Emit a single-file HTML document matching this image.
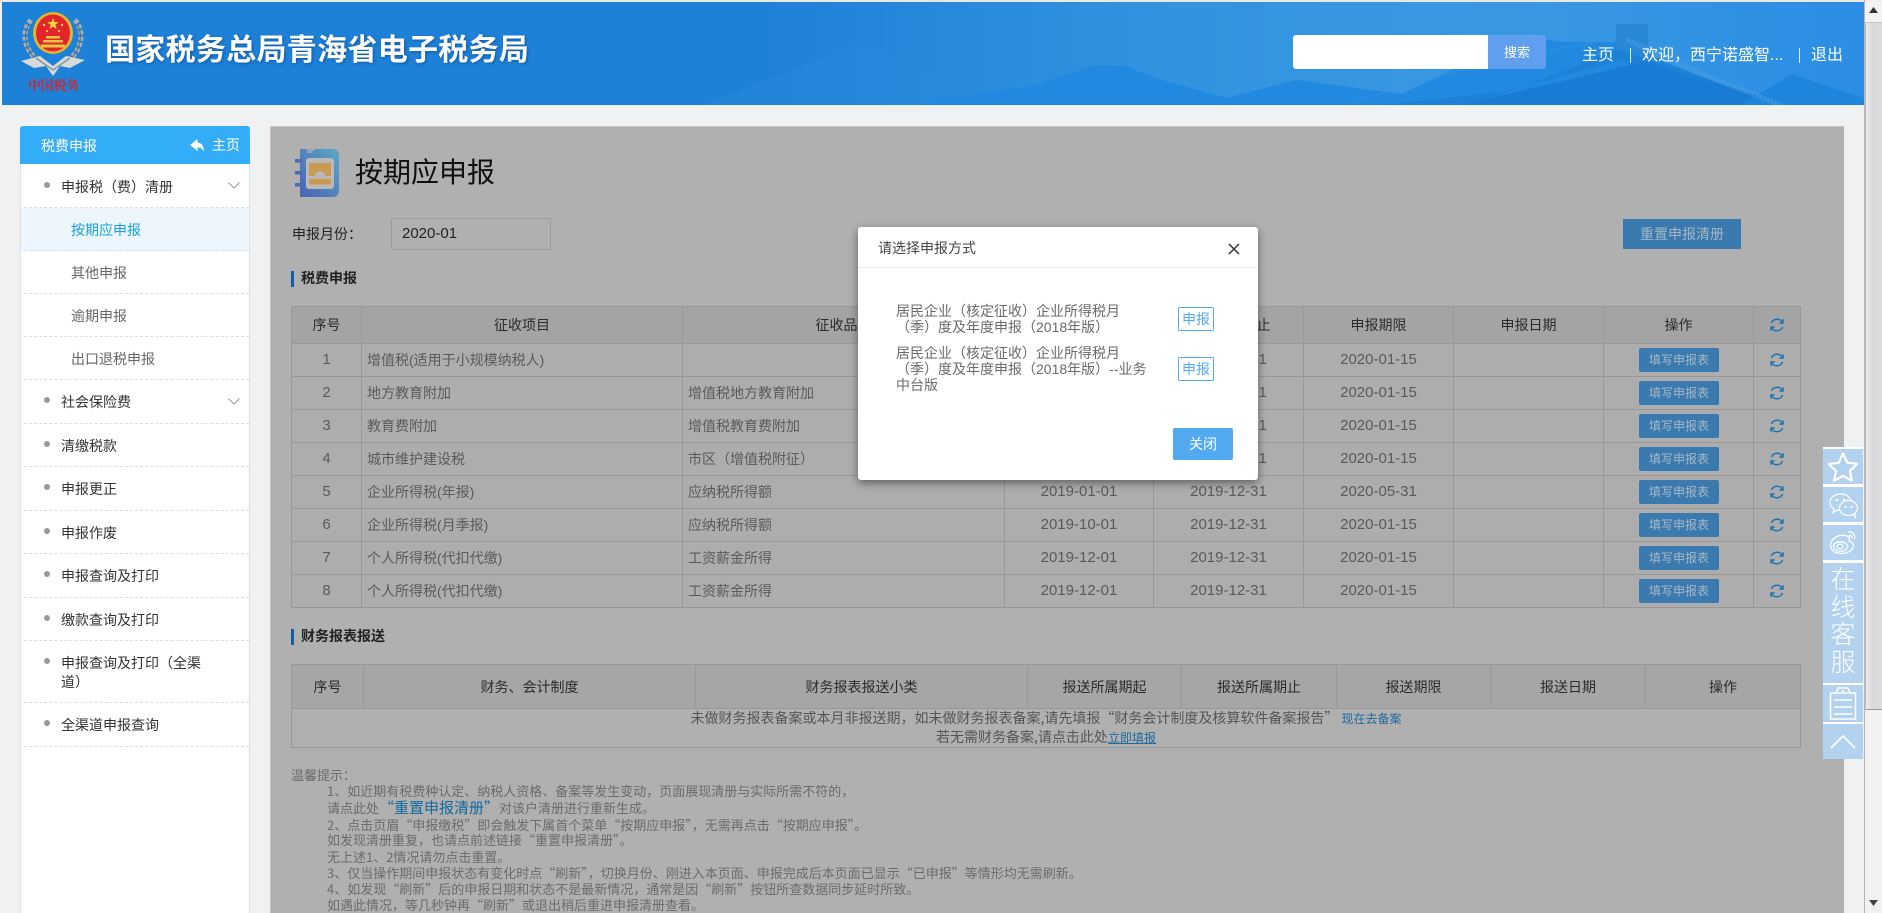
<!DOCTYPE html>
<html lang="zh-CN">
<head>
<meta charset="utf-8">
<title>国家税务总局青海省电子税务局</title>
<style>
html,body{margin:0;padding:0;width:1882px;height:913px;overflow:hidden;background:#f0f1f3}
body{position:relative;font-family:"Liberation Sans","Noto Sans CJK SC",sans-serif;font-size:14px;color:#333}
.t{position:absolute;white-space:nowrap;line-height:20px}
.a{position:absolute}
#hd{position:absolute;left:2px;top:2px;width:1862px;height:103px;overflow:hidden;background:linear-gradient(90deg,#1e81d8 0,#1e81d8 760px,#3193e0 1150px,#3a98e3 1500px,#2b8ee4 1862px)}
#side{position:absolute;left:20px;top:126px;width:228px;height:787px;background:#fff;border-left:1px solid #dcdfe3;border-right:1px solid #dcdfe3}
#side .h{position:absolute;left:-1px;top:0;width:230px;height:38px;background:#33adf7;border-radius:3px 3px 0 0}
.d{position:absolute;left:24px;width:225px;border-top:1px dashed #dedede;height:0}
.b{position:absolute;left:44px;width:6px;height:6px;border-radius:50%;background:#999}
.p{left:61px;color:#333}
.s{left:71px;color:#666}
#panel{position:absolute;left:270px;top:126px;width:1574px;height:787px;background:#b0b0b0;border-left:1px solid #c4c4c4;border-top:1px solid #c4c4c4;box-sizing:border-box}
table{position:absolute;border-collapse:collapse;table-layout:fixed;left:291px;font-size:14px}
td,th{border:1px solid #989898;padding:0;text-align:center;font-weight:normal;color:#5a5a5a;overflow:hidden;white-space:nowrap;line-height:20px}
th{background:#a4a4a4;color:#2b2b2b}
#t1 td{background:#adadad;height:32px}
#t1 th{height:36px}
#t1 td.l{text-align:left;padding-left:5px}
.n{font-size:15px}
.bn{display:block;width:80px;height:24px;line-height:24px;margin:0 0 0 35px;background:#3b7aae;color:#a6b8c8;font-size:12px;border-radius:2px;text-align:center}
#t2 th{height:43px;background:#a6a6a6}
#t2 td{background:#b0b0b0;color:#555;height:37px;line-height:19px;font-family:"Noto Sans CJK SC","Liberation Sans",sans-serif}
.lk{color:#1c6a9e;font-size:12px}
.note{position:absolute;left:327px;white-space:nowrap;font-size:13px;line-height:16px;color:#6b6b6b;font-family:"Noto Sans CJK SC","Liberation Sans",sans-serif}
#modal{position:absolute;left:858px;top:227px;width:400px;height:253px;background:#fff;border-radius:3px;box-shadow:0 3px 9px rgba(0,0,0,.45)}
.mb{position:absolute;left:320px;width:34px;height:22px;line-height:22px;border:1px solid #55aaf0;border-radius:2px;color:#55aaf0;text-align:center;font-size:14px}
.mt{position:absolute;left:38px;color:#6a6a6a;font-size:14px;line-height:16px;white-space:nowrap}
#float{position:absolute;left:1823px;top:447px;width:40px;height:312px;background:#fff}
.fc{position:absolute;left:0;width:40px;background:#b3d2ef}
#sb{position:absolute;left:1864px;top:0;width:18px;height:913px;background:#f1f1f1;border-left:1px solid #b5b5b5;box-sizing:border-box}
</style>
</head>
<body>
<svg width="0" height="0" style="position:absolute"><defs>
<symbol id="r" viewBox="0 0 16 16"><g fill="none" stroke="#1a72b0" stroke-width="1.4"><path d="M13.6 5.6A6.2 6.2 0 0 0 2.4 6"/><path d="M2.4 10.4A6.2 6.2 0 0 0 13.6 10"/><path d="M14 2.2V6H10.4"/><path d="M2 13.8V10H5.6"/></g></symbol>
<symbol id="c" viewBox="0 0 12 7"><path d="M.5.5 6 6 11.5.5" fill="none" stroke="#999" stroke-width="1"/></symbol>
</defs></svg>

<div style="position:absolute;left:0;top:0;width:1882px;height:2px;background:#e9e9e9"></div>

<div id="hd">
<svg class="a" style="left:0;top:0" width="1862" height="103" viewBox="0 0 1862 103">
<polygon points="700,103 860,40 1010,103" fill="#2a8cdf" opacity=".35"/>
<polygon points="916,101 1030,84 1066,72 1095,63 1122,64 1160,78 1224,96 1294,78 1340,84 1400,92 1462,62 1525,34 1560,40 1618,40 1760,103 916,103" fill="#2189e0"/>
<polygon points="1380,103 1470,103 1560,70 1620,46 1780,103 1700,103 1620,58 1500,90" fill="#1d81d8"/>
<polygon points="1460,103 1640,60 1790,103" fill="#197cd4"/>
<polygon points="1740,103 1790,72 1862,96 1862,103" fill="#1e85dc"/>
<polygon points="1614,22 1646,22 1646,50 1660,62 1614,46" fill="#2a88d8"/>
<path d="M1350 100 1480 62 1612 36" stroke="#3b97de" stroke-width="3" fill="none" stroke-dasharray="3 2" opacity=".4"/>
<path d="M1625 38 1700 72 1778 103" stroke="#55a5e6" stroke-width="5" fill="none" stroke-dasharray="3 1" opacity=".45"/>
</svg>
<svg class="a" style="left:0;top:0" width="100" height="100" viewBox="0 0 100 100">
<g transform="translate(-2 -2)">
<g fill="none" stroke="#a8b0b4" stroke-width="5" stroke-dasharray="4 2"><path d="M31 20C20 32 24 54 44 64"/><path d="M75 20C86 32 82 54 62 64"/></g>
<g fill="none" stroke="#5f6d70" stroke-width="1"><path d="M29 24C22 36 26 54 42 64"/><path d="M77 24C84 36 80 54 64 64"/></g>
<path d="M21 61 40 56 53 66 66 56 85 60 70 68 60 66 53 76 46 66 34 68Z" fill="#d7dadb"/>
<path d="M36 58 53 70 70 58" fill="none" stroke="#8a9496" stroke-width="1.5"/>
<ellipse cx="53" cy="33" rx="20" ry="21" fill="#e3b52c"/>
<ellipse cx="53" cy="33" rx="17" ry="18.500" fill="#e1252b"/>
<path d="M53 18l1.500 4 4.300.1-3.400 2.700 1.200 4.200-3.600-2.400-3.600 2.400 1.200-4.200-3.400-2.700 4.300-.1z" fill="#f6d63c"/>
<circle cx="44" cy="25" r="1.200" fill="#f6d63c"/><circle cx="62" cy="25" r="1.200" fill="#f6d63c"/><circle cx="47" cy="31" r="1.100" fill="#f6d63c"/><circle cx="59" cy="31" r="1.100" fill="#f6d63c"/>
<path d="M46 36h14v2.500H46zM43 40h20v2.500H43zM41 44.500h24v3H41z" fill="#eec445"/>
<text x="28" y="90" font-family="'Noto Serif CJK SC',serif" font-size="13" font-weight="700" fill="#d8232a" textLength="51">中国税务</text>
</g>
</svg>
<div class="t" style="left:103px;top:26px;line-height:46px;font-size:30px;letter-spacing:.3px;font-weight:700;color:#fff;text-shadow:1px 1px 3px rgba(0,40,90,.45)">国家税务总局青海省电子税务局</div>
<div class="a" style="left:1291px;top:33px;width:195px;height:34px;background:#fff;border-radius:3px 0 0 3px"></div>
<div class="a" style="left:1486px;top:33px;width:58px;height:34px;line-height:35px;background:#609fee;border-radius:0 3px 3px 0;color:#fff;font-size:13px;text-align:center">搜索</div>
<div class="t" style="left:1580px;top:44px;font-size:16px;color:#fff">主页</div>
<div class="a" style="left:1628px;top:46px;width:1px;height:15px;background:#dff0ff"></div>
<div class="t" style="left:1640px;top:44px;font-size:16px;color:#fff">欢迎，西宁诺盛智...</div>
<div class="a" style="left:1797px;top:46px;width:1px;height:15px;background:#dff0ff"></div>
<div class="t" style="left:1809px;top:44px;font-size:16px;color:#fff">退出</div>
</div>

<div id="side">
<div class="h"></div>
<div class="t" style="left:20px;top:10px;color:#fff">税费申报</div>
<svg class="a" style="left:169px;top:13px" width="15" height="13" viewBox="0 0 15 13"><path d="M7.500 0 0 6l7.500 6V8.500c3 0 5 1.200 6.500 4C14 7 11.500 3.700 7.500 3.500Z" fill="#fff"/></svg>
<div class="t" style="left:191px;top:9px;color:#fff">主页</div>
</div>

<div class="b" style="top:182px"></div><div class="t p" style="top:177px">申报税（费）清册</div>
<svg class="a" style="left:228px;top:182px" width="12" height="7"><use href="#c"/></svg>
<div class="d" style="top:207px"></div>
<div class="a" style="left:21px;top:208px;width:228px;height:43px;background:#edf5fd"></div>
<div class="t s" style="top:220px;color:#17a2d6">按期应申报</div>
<div class="d" style="top:250px"></div>
<div class="t s" style="top:263px">其他申报</div><div class="d" style="top:293px"></div>
<div class="t s" style="top:306px">逾期申报</div><div class="d" style="top:336px"></div>
<div class="t s" style="top:349px">出口退税申报</div><div class="d" style="top:379px"></div>
<div class="b" style="top:397px"></div><div class="t p" style="top:392px">社会保险费</div>
<svg class="a" style="left:228px;top:398px" width="12" height="7"><use href="#c"/></svg>
<div class="d" style="top:423px"></div>
<div class="b" style="top:441px"></div><div class="t p" style="top:436px">清缴税款</div><div class="d" style="top:466px"></div>
<div class="b" style="top:484px"></div><div class="t p" style="top:479px">申报更正</div><div class="d" style="top:510px"></div>
<div class="b" style="top:528px"></div><div class="t p" style="top:523px">申报作废</div><div class="d" style="top:553px"></div>
<div class="b" style="top:571px"></div><div class="t p" style="top:566px">申报查询及打印</div><div class="d" style="top:597px"></div>
<div class="b" style="top:615px"></div><div class="t p" style="top:610px">缴款查询及打印</div><div class="d" style="top:640px"></div>
<div class="b" style="top:658px"></div><div class="t p" style="top:653px">申报查询及打印（全渠</div><div class="t p" style="top:672px">道）</div><div class="d" style="top:702px"></div>
<div class="b" style="top:720px"></div><div class="t p" style="top:715px">全渠道申报查询</div><div class="d" style="top:746px"></div>

<div id="panel"></div>

<svg class="a" style="left:295px;top:148px" width="44" height="50" viewBox="0 0 44 50">
<defs><linearGradient id="bk" x1="0" y1="1" x2="1" y2="0"><stop offset="0" stop-color="#4a62b4"/><stop offset="1" stop-color="#5aa8c6"/></linearGradient></defs>
<path d="M5 1H38a6 6 0 0 1 6 6V43a6 6 0 0 1-6 6H5Z" fill="url(#bk)"/>
<path d="M12 0h9l-4 5h-5z" fill="#b0b0b0" opacity=".7"/>
<rect x="0" y="11" width="7" height="3.500" fill="#4a6cb8"/><rect x="0" y="23" width="7" height="3.500" fill="#4a6cb8"/><rect x="0" y="35" width="7" height="3.500" fill="#4a6cb8"/>
<rect x="11" y="10" width="28" height="31" rx="3" fill="#b9b9b9"/>
<path d="M14 15H36V28H30C30 22 20 22 20 28H14Z" fill="#c99b52"/>
<rect x="14" y="31" width="22" height="5.500" fill="#c99b52"/>
</svg>
<div class="t" style="left:355px;top:153px;line-height:40px;font-size:28px;color:#0f0f0f">按期应申报</div>

<div class="t" style="left:292px;top:224px;color:#222">申报月份：</div>
<div class="a" style="left:391px;top:218px;width:158px;height:30px;border:1px solid #9b9b9b;border-radius:2px"></div>
<div class="t" style="left:402px;top:224px;font-size:15px;color:#222">2020-01</div>
<div class="a" style="left:1623px;top:219px;width:118px;height:30px;line-height:30px;background:#3b7aae;color:#a4b6c6;text-align:center">重置申报清册</div>

<div class="a" style="left:291px;top:271px;width:3px;height:16px;background:#0f5fa8"></div>
<div class="t" style="left:301px;top:268px;font-weight:700;color:#222">税费申报</div>

<table id="t1" style="top:306px;width:1509px">
<colgroup><col style="width:70px"><col style="width:321px"><col style="width:322px"><col style="width:149px"><col style="width:150px"><col style="width:150px"><col style="width:150px"><col style="width:150px"><col style="width:47px"></colgroup>
<tr><th>序号</th><th>征收项目</th><th>征收品目</th><th>税款所属期起</th><th>税款所属期止</th><th>申报期限</th><th>申报日期</th><th>操作</th><th><svg width="16" height="16" style="display:block;margin:0 auto"><use href="#r"/></svg></th></tr>
<tr><td class="n">1</td><td class="l">增值税(适用于小规模纳税人)</td><td class="l"></td><td class="n">2019-12-01</td><td class="n">2019-12-31</td><td class="n">2020-01-15</td><td></td><td><span class="bn">填写申报表</span></td><td><svg width="16" height="16" style="display:block;margin:0 auto"><use href="#r"/></svg></td></tr>
<tr><td class="n">2</td><td class="l">地方教育附加</td><td class="l">增值税地方教育附加</td><td class="n">2019-12-01</td><td class="n">2019-12-31</td><td class="n">2020-01-15</td><td></td><td><span class="bn">填写申报表</span></td><td><svg width="16" height="16" style="display:block;margin:0 auto"><use href="#r"/></svg></td></tr>
<tr><td class="n">3</td><td class="l">教育费附加</td><td class="l">增值税教育费附加</td><td class="n">2019-12-01</td><td class="n">2019-12-31</td><td class="n">2020-01-15</td><td></td><td><span class="bn">填写申报表</span></td><td><svg width="16" height="16" style="display:block;margin:0 auto"><use href="#r"/></svg></td></tr>
<tr><td class="n">4</td><td class="l">城市维护建设税</td><td class="l">市区（增值税附征）</td><td class="n">2019-12-01</td><td class="n">2019-12-31</td><td class="n">2020-01-15</td><td></td><td><span class="bn">填写申报表</span></td><td><svg width="16" height="16" style="display:block;margin:0 auto"><use href="#r"/></svg></td></tr>
<tr><td class="n">5</td><td class="l">企业所得税(年报)</td><td class="l">应纳税所得额</td><td class="n">2019-01-01</td><td class="n">2019-12-31</td><td class="n">2020-05-31</td><td></td><td><span class="bn">填写申报表</span></td><td><svg width="16" height="16" style="display:block;margin:0 auto"><use href="#r"/></svg></td></tr>
<tr><td class="n">6</td><td class="l">企业所得税(月季报)</td><td class="l">应纳税所得额</td><td class="n">2019-10-01</td><td class="n">2019-12-31</td><td class="n">2020-01-15</td><td></td><td><span class="bn">填写申报表</span></td><td><svg width="16" height="16" style="display:block;margin:0 auto"><use href="#r"/></svg></td></tr>
<tr><td class="n">7</td><td class="l">个人所得税(代扣代缴)</td><td class="l">工资薪金所得</td><td class="n">2019-12-01</td><td class="n">2019-12-31</td><td class="n">2020-01-15</td><td></td><td><span class="bn">填写申报表</span></td><td><svg width="16" height="16" style="display:block;margin:0 auto"><use href="#r"/></svg></td></tr>
<tr><td class="n">8</td><td class="l">个人所得税(代扣代缴)</td><td class="l">工资薪金所得</td><td class="n">2019-12-01</td><td class="n">2019-12-31</td><td class="n">2020-01-15</td><td></td><td><span class="bn">填写申报表</span></td><td><svg width="16" height="16" style="display:block;margin:0 auto"><use href="#r"/></svg></td></tr>
</table>

<div class="a" style="left:291px;top:629px;width:3px;height:16px;background:#0f5fa8"></div>
<div class="t" style="left:301px;top:626px;font-weight:700;color:#222">财务报表报送</div>

<table id="t2" style="top:664px;width:1509px">
<colgroup><col style="width:72px"><col style="width:332px"><col style="width:332px"><col style="width:154px"><col style="width:155px"><col style="width:154px"><col style="width:155px"><col style="width:155px"></colgroup>
<tr><th>序号</th><th>财务、会计制度</th><th>财务报表报送小类</th><th>报送所属期起</th><th>报送所属期止</th><th>报送期限</th><th>报送日期</th><th>操作</th></tr>
<tr><td colspan="8">未做财务报表备案或本月非报送期，如未做财务报表备案,请先填报“财务会计制度及核算软件备案报告” <span class="lk">现在去备案</span><br>若无需财务备案,请点击此处<span class="lk" style="text-decoration:underline">立即填报</span></td></tr>
</table>

<div class="note" style="left:291px;top:767px">温馨提示：</div>
<div class="note" style="top:783px">1、如近期有税费种认定、纳税人资格、备案等发生变动，页面展现清册与实际所需不符的，</div>
<div class="note" style="top:800px">请点此处<span style="font-size:15px;color:#156a9c">“重置申报清册”</span>对该户清册进行重新生成。</div>
<div class="note" style="top:817px">2、点击页眉“申报缴税”即会触发下属首个菜单“按期应申报”，无需再点击“按期应申报”。</div>
<div class="note" style="top:832px">如发现清册重复，也请点前述链接“重置申报清册”。</div>
<div class="note" style="top:849px">无上述1、2情况请勿点击重置。</div>
<div class="note" style="top:865px">3、仅当操作期间申报状态有变化时点“刷新”，切换月份、刚进入本页面、申报完成后本页面已显示“已申报”等情形均无需刷新。</div>
<div class="note" style="top:881px">4、如发现“刷新”后的申报日期和状态不是最新情况，通常是因“刷新”按钮所查数据同步延时所致。</div>
<div class="note" style="top:897px">如遇此情况，等几秒钟再“刷新”或退出稍后重进申报清册查看。</div>

<div id="modal">
<div class="t" style="left:20px;top:11px;color:#444">请选择申报方式</div>
<svg class="a" style="left:370px;top:16px" width="12" height="12" viewBox="0 0 12 12"><path d="M1 1 11 11M11 1 1 11" stroke="#333" stroke-width="1.500" fill="none"/></svg>
<div class="a" style="left:0;top:40px;width:400px;height:1px;background:#eee"></div>
<div class="mt" style="top:76px">居民企业（核定征收）企业所得税月<br>（季）度及年度申报（2018年版）</div>
<div class="mb" style="top:80px">申报</div>
<div class="mt" style="top:118px">居民企业（核定征收）企业所得税月<br>（季）度及年度申报（2018年版）--业务<br>中台版</div>
<div class="mb" style="top:130px">申报</div>
<div class="a" style="left:315px;top:201px;width:60px;height:32px;line-height:32px;background:#52aaf0;border-radius:2px;color:#fff;text-align:center">关闭</div>
</div>

<div id="float">
<div class="fc" style="top:2px;height:35px"><svg width="40" height="35" viewBox="0 0 40 35"><path d="M20 4.500l4.300 9.200 10 1.200-7.400 6.900 2 9.900L20 26.800l-8.900 5 2-9.900-7.400-6.900 10-1.200z" fill="none" stroke="#fff" stroke-width="2.200" stroke-linejoin="round"/></svg></div>
<div class="fc" style="top:40px;height:35px"><svg width="40" height="35" viewBox="0 0 40 35" fill="none" stroke="#fff" stroke-width="1.200"><path d="M18 7C11 7 7 11 7 15.500c0 3 2 5.200 4 6.500l-1 3.500 4-2.500c1 .3 2 .4 3 .4"/><path d="M18 7c5 0 9 3 10 7"/><ellipse cx="25.500" cy="21" rx="9" ry="7.500"/><path d="M30 27l2 3-.3-4"/><g fill="#fff" stroke="none"><circle cx="14" cy="13" r="1.300"/><circle cx="21" cy="13" r="1.300"/><circle cx="22.500" cy="20" r="1.100"/><circle cx="28.500" cy="20" r="1.100"/></g></svg></div>
<div class="fc" style="top:78px;height:35px"><svg width="40" height="35" viewBox="0 0 40 35" fill="none" stroke="#fff" stroke-width="1.300"><path d="M26 12C18 7 7 13 7.500 21c.4 5 6 7.500 11 7.500 7 0 12-4 12-8 0-3-3-4-4.500-4.500 .8-2 .5-3-.5-4Z"/><ellipse cx="17.500" cy="21.500" rx="7" ry="4.800"/><ellipse cx="17" cy="21.500" rx="3" ry="2.300"/><path d="M25 7c4-1 7.500 2.500 6.500 7"/><path d="M26 10.500c2-.5 3.500 1 3 3"/></svg></div>
<div class="fc" style="top:116px;height:120px;color:#fff;font-size:25px;line-height:27.500px;text-align:center;font-weight:300"><div style="padding-top:4px">在<br>线<br>客<br>服</div></div>
<div class="fc" style="top:238px;height:37px"><svg width="40" height="37" viewBox="0 0 40 37" fill="none" stroke="#fff" stroke-width="1.500"><path d="M13 8H7.500v26h25V8H27"/><path d="M13 8l2-5h10l2 5z"/><circle cx="20" cy="6" r="1" fill="#fff" stroke="none"/><path d="M11 15H29M11 22H29M11 29H29"/></svg></div>
<div class="fc" style="top:277px;height:35px"><svg width="40" height="35" viewBox="0 0 40 35"><path d="M8 24 20 12 32 24" fill="none" stroke="#fff" stroke-width="1.800"/></svg></div>
</div>

<div id="sb">
<div class="a" style="left:0;top:2px;width:17px;height:20px;background:#f3f3f3;border-bottom:1px solid #c4c4c4"></div>
<svg class="a" style="left:4px;top:7px" width="9" height="6"><path d="M4.500 0 9 6H0z" fill="#333"/></svg>
<div class="a" style="left:0;top:23px;width:17px;height:687px;background:linear-gradient(90deg,#ececec 0,#d6d7d9 45%,#dcdcde 100%);border-bottom:1px solid #9a9a9a;border-left:1px solid #bbb;box-sizing:border-box"></div>
<svg class="a" style="left:4px;top:900px" width="9" height="6"><path d="M4.500 6 9 0H0z" fill="#444"/></svg>
</div>
</body>
</html>
